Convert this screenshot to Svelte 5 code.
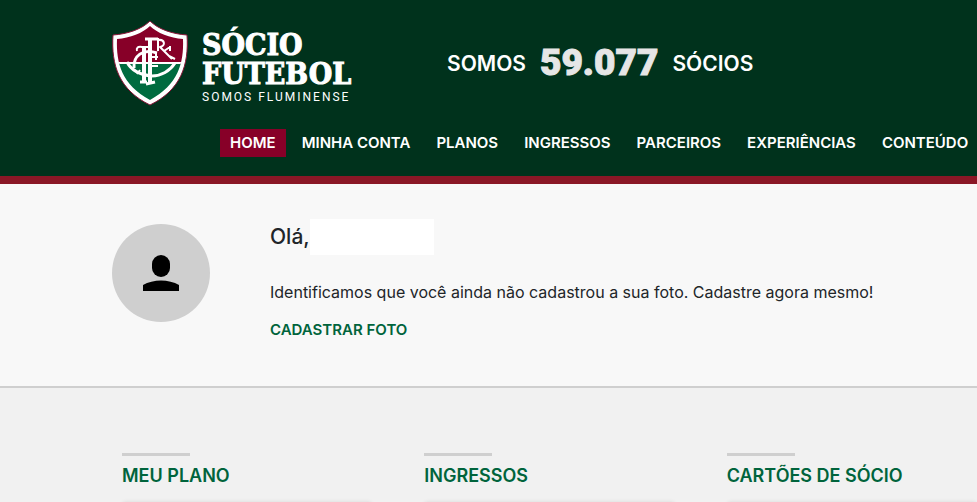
<script lang="ts">
  const menu = ['Home', 'Minha conta', 'Planos', 'Ingressos', 'Parceiros', 'Experiências', 'Conteúdo'];
  const cards = ['Meu plano', 'Ingressos', 'Cartões de sócio'];

  let active = $state('Home');
  let members = 59077;

  function formatCount(value: number): string {
    return value.toString().replace(/\B(?=(\d{3})+$)/g, '.');
  }
</script>

<header class="header">
  <div class="top">
    <a class="brand" href="#home">
      <svg class="shield" width="76" height="86" viewBox="0 0 76 86" aria-hidden="true">
        <defs>
          <clipPath id="shield-clip">
            <path d="M38 6C31 13 18 18 5 19C4 43 10 65 38 80C66 65 72 43 71 19C58 18 45 13 38 6Z" />
          </clipPath>
        </defs>
        <path d="M38 1C30 9 16 14 1 15C-1 45 7 70 38 85C69 70 77 45 75 15C60 14 46 9 38 1Z" fill="#fff" stroke="#8a1538" stroke-width="1" />
        <g clip-path="url(#shield-clip)">
          <rect width="76" height="44" fill="#870028" />
          <rect y="44" width="76" height="42" fill="#006b3f" />
          <rect y="42" width="76" height="2" fill="#fff" />
        </g>
        <!-- Monogram -->
        <g fill="none" stroke="#fff" stroke-width="3" stroke-linejoin="round">
          <path d="M32 28V62M38 19V64" stroke-width="4" />
          <path d="M33 19H46M28 62H35M34 64L43 62" />
          <path d="M25 31C24 28 26 26 30 27H36" stroke-width="2" />
          <path d="M45 33C31 28 21 36 22 48" />
          <path d="M15 42C20 52 30 55 40 56C49 56 58 51 63 43" />
          <path d="M55 43H66M25 54L28 50" stroke-width="2" />
          <path d="M40 37H46M44 33V40M40 46H46" stroke-width="2" />
          <path d="M46 18V31M46 20C53 19 54 26 48 27L55 34L60 39M52 31L58 27M58 26V31M57 36L63 39" stroke-width="2" />
        </g>
      </svg>
      <span class="brand-name">
        <strong>SÓCIO</strong>
        <strong>FUTEBOL</strong>
        <small>SOMOS FLUMINENSE</small>
      </span>
    </a>
    <p class="counter">
      <span>SOMOS</span>
      <b>{formatCount(members)}</b>
      <span>SÓCIOS</span>
    </p>
  </div>
  <nav class="menu">
    {#each menu as item}
      <a href="#{item}" class:active={active === item} onclick={() => (active = item)}>{item}</a>
    {/each}
  </nav>
</header>

<main>
  <section class="welcome">
    <div class="avatar">
      <svg width="38" height="38" viewBox="0 0 38 38" aria-hidden="true">
        <rect x="10" y="1" width="18" height="22" rx="9" />
        <path d="M1 37V31C11 25 27 25 37 31V37Z" />
      </svg>
    </div>
    <div class="welcome-text">
      <h1>Olá,<span class="user-name"></span></h1>
      <p>Identificamos que você ainda não cadastrou a sua foto. Cadastre agora mesmo!</p>
      <a href="#foto">CADASTRAR FOTO</a>
    </div>
  </section>

  <section class="cards">
    {#each cards as title}
      <article>
        <h2>{title}</h2>
        <div class="card"></div>
      </article>
    {/each}
  </section>
</main>

<style>
  :global(body) {
    margin: 0;
    background: #f1f1f1;
    color: #212529;
    font-family: Inter, "Liberation Sans", sans-serif;
    overflow: hidden;
  }

  a {
    text-decoration: none;
  }

  .header {
    padding: 20px 0 19px 112px;
    background: #00321c;
    border-bottom: 8px solid #8a1726;
    color: #fff;
  }

  .top {
    display: flex;
    align-items: center;
    gap: 94px;
  }

  .brand {
    display: flex;
    align-items: center;
    gap: 14px;
    color: #fff;
  }

  .brand-name {
    display: flex;
    flex-direction: column;
    width: 151px;
    padding-top: 10px;
    white-space: nowrap;
  }

  .brand-name strong {
    font-family: "DejaVu Serif Condensed", "DejaVu Serif", serif;
    font-size: 30px;
    line-height: 29px;
    -webkit-text-stroke: 1px #fff;
  }

  .brand-name small {
    font-family: Roboto, sans-serif;
    font-size: 12px;
    line-height: 18px;
    letter-spacing: 2px;
  }

  .counter {
    display: flex;
    align-items: center;
    gap: 14px;
    margin: 0;
    font-size: 21px;
    font-weight: 600;
    white-space: nowrap;
  }

  .counter b {
    color: #e6e6e6;
    font-family: Roboto, sans-serif;
    font-size: 37px;
    font-weight: 900;
    line-height: 40px;
    -webkit-text-stroke: 1px #e6e6e6;
  }

  .menu {
    display: flex;
    gap: 6px;
    margin: 23px 0 0 108px;
    white-space: nowrap;
  }

  .menu a {
    padding: 0 10px;
    color: #fff;
    font-size: 15px;
    font-weight: 600;
    line-height: 28px;
    text-transform: uppercase;
  }

  .menu a.active {
    background: #870028;
  }

  .welcome {
    display: flex;
    gap: 60px;
    padding: 35px 0 44px 112px;
    background: #f8f8f8;
    border-bottom: 2px solid #cfcfcf;
  }

  .avatar {
    display: flex;
    flex: none;
    align-items: center;
    justify-content: center;
    width: 98px;
    height: 98px;
    margin-top: 5px;
    border-radius: 50%;
    background: #cfcfcf;
  }

  .welcome h1 {
    display: flex;
    margin: 0 0 25px;
    font-size: 21px;
    font-weight: 500;
    line-height: 36px;
  }

  .user-name {
    width: 124px;
    background: #fff;
  }

  .welcome p {
    margin: 0 0 14px;
    font-size: 16px;
    line-height: 24px;
  }

  .welcome a {
    display: inline-block;
    color: #00643c;
    font-size: 15px;
    font-weight: 600;
    line-height: 24px;
  }

  .cards {
    display: grid;
    grid-template-columns: repeat(3, minmax(0, 1fr));
    gap: 52px;
    padding: 65px 0 0 122px;
  }

  .cards h2 {
    margin: 0 0 15px;
    color: #00643c;
    font-size: 18px;
    font-weight: 600;
    line-height: 22px;
    text-transform: uppercase;
    white-space: nowrap;
  }

  .cards h2::before {
    display: block;
    width: 68px;
    height: 3px;
    margin-bottom: 9px;
    background: #cfcfcf;
    content: "";
  }

  .card {
    height: 180px;
    border-radius: 4px;
    background: #f8f8f8;
    box-shadow: 0 0 4px rgba(0, 0, 0, 0.1);
  }
</style>
